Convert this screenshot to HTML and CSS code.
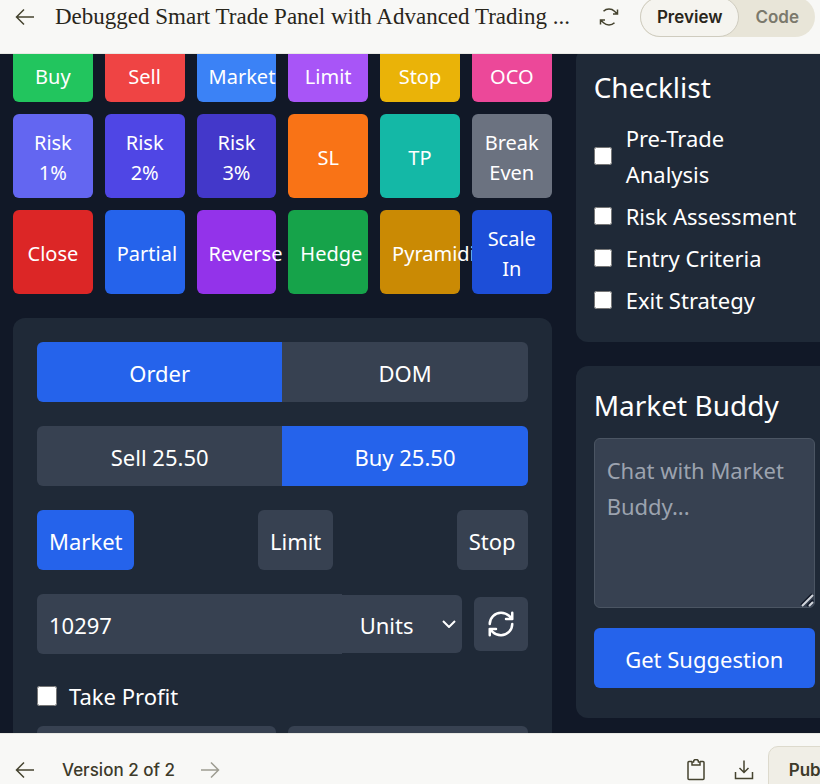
FILE: index.html
```html
<!DOCTYPE html>
<html lang="en">
<head>
<meta charset="utf-8">
<title>Smart Trade Panel</title>
<link rel="stylesheet" href="styles.css">
</head>
<body>
<header class="topbar">
  <div class="topbar-row">
    <button class="icon-btn" aria-label="Back">
      <svg width="20" height="20" viewBox="0 0 20 20"><path d="M19 10H1.5M9 2.5 1.5 10 9 17.5"/></svg>
    </button>
    <h1 class="title">Debugged Smart Trade Panel with Advanced Trading ...</h1>
    <button class="icon-btn" aria-label="Refresh">
      <svg width="20" height="20" viewBox="0 0 20 20"><path d="M18.5 2.500V7H14M18.300 7 15.500 4.300A7.800 7.800 0 0 0 4.500 4.300M1.500 17.500V13H6M1.700 13 4.500 15.700A7.800 7.800 0 0 0 15.500 15.700"/></svg>
    </button>
    <div class="switch">
      <button class="switch-item active">Preview</button>
      <button class="switch-item">Code</button>
    </div>
  </div>
</header>

<main class="preview">
  <div class="layout">
    <div class="trading">
      <div class="actions">
        <button class="action green">Buy</button>
        <button class="action red">Sell</button>
        <button class="action blue">Market</button>
        <button class="action purple">Limit</button>
        <button class="action yellow">Stop</button>
        <button class="action pink">OCO</button>
        <button class="action indigo">Risk 1%</button>
        <button class="action indigo-mid">Risk 2%</button>
        <button class="action indigo-dark">Risk 3%</button>
        <button class="action orange">SL</button>
        <button class="action teal">TP</button>
        <button class="action gray">Break Even</button>
        <button class="action red-dark">Close</button>
        <button class="action blue-mid">Partial</button>
        <button class="action purple-dark">Reverse</button>
        <button class="action green-dark">Hedge</button>
        <button class="action yellow-dark">Pyramiding</button>
        <button class="action blue-dark">Scale In</button>
      </div>

      <section class="card order">
        <div class="segmented">
          <button class="btn primary">Order</button>
          <button class="btn">DOM</button>
        </div>
        <div class="segmented">
          <button class="btn">Sell 25.50</button>
          <button class="btn primary">Buy 25.50</button>
        </div>
        <div class="types">
          <button class="btn primary">Market</button>
          <button class="btn">Limit</button>
          <button class="btn">Stop</button>
        </div>
        <div class="amount">
          <input class="field amount-input" type="text" value="10297" aria-label="Amount">
          <div class="unit">
            <select class="unit-select" aria-label="Unit"><option>Units</option></select>
            <svg class="chevron" width="14" height="8" viewBox="0 0 14 8"><path d="M1 1l6 6 6-6"/></svg>
          </div>
          <button class="btn refresh" aria-label="Refresh amount">
            <svg width="30" height="30" viewBox="0 0 24 24"><path d="M3 12a9 9 0 0 1 9-9 9.750 9.750 0 0 1 6.740 2.740L21 8M21 3v5h-5M21 12a9 9 0 0 1-9 9 9.750 9.750 0 0 1-6.740-2.740L3 16M8 16H3v5"/></svg>
          </button>
        </div>
        <label class="take"><input type="checkbox"><span>Take Profit</span></label>
        <div class="levels">
          <input class="field" type="text" aria-label="Take profit price">
          <input class="field" type="text" aria-label="Take profit amount">
        </div>
      </section>
    </div>

    <aside class="side">
      <section class="card">
        <h2>Checklist</h2>
        <label class="check"><input type="checkbox"><span>Pre-Trade Analysis</span></label>
        <label class="check"><input type="checkbox"><span>Risk Assessment</span></label>
        <label class="check"><input type="checkbox"><span>Entry Criteria</span></label>
        <label class="check"><input type="checkbox"><span>Exit Strategy</span></label>
      </section>
      <section class="card buddy">
        <h2>Market Buddy</h2>
        <div class="chat-box">
          <textarea class="chat" rows="4" placeholder="Chat with Market Buddy..." aria-label="Chat with Market Buddy"></textarea>
          <svg class="grip" width="14" height="14" viewBox="0 0 14 14"><path class="grip-dark" d="M1 12 12 1M7 13 13 7"/><path class="grip-light" d="M2 13 13 2M9 13 13 9"/></svg>
        </div>
        <button class="btn primary suggest">Get Suggestion</button>
      </section>
    </aside>
  </div>
</main>

<footer class="bottombar">
  <div class="bottom-row">
    <button class="icon-btn" aria-label="Previous version">
      <svg width="20" height="20" viewBox="0 0 20 20"><path d="M19 10H1.500M9 2.500 1.500 10 9 17.500"/></svg>
    </button>
    <span class="version">Version 2 of 2</span>
    <button class="icon-btn faded" aria-label="Next version" disabled>
      <svg width="20" height="20" viewBox="0 0 20 20"><path d="M1 10h17.500M11 2.500 18.500 10 11 17.500"/></svg>
    </button>
    <div class="tools">
      <button class="icon-btn" aria-label="Copy">
        <svg width="20" height="22" viewBox="0 0 20 22"><path d="M6 2.500H3a1 1 0 0 0-1 1V19.500a1 1 0 0 0 1 1H17a1 1 0 0 0 1-1V3.500a1 1 0 0 0-1-1H14M6 6V3H7.500A2.500 2.500 0 0 1 12.500 3H14V6Z"/></svg>
      </button>
      <button class="icon-btn" aria-label="Download">
        <svg width="20" height="22" viewBox="0 0 20 22"><path d="M10 1.500V13.500M5.500 9 10 13.500 14.500 9M1.500 13V19.500H18.500V13"/></svg>
      </button>
    </div>
    <button class="publish">Publish</button>
  </div>
</footer>
</body>
</html>
```
FILE: styles.css
```css
* { box-sizing: border-box; }

body {
  margin: 0;
  height: 100vh;
  display: flex;
  flex-direction: column;
  overflow: hidden;
  background: #111827;
  color: #fff;
  font-family: "Noto Sans", "Segoe UI", sans-serif;
  font-size: 22px;
  line-height: 36px;
}

button, input, select, textarea { font: inherit; color: inherit; }
button { border: 0; padding: 0; background: none; }
svg { display: block; fill: none; stroke: currentColor; }

/* App chrome */
.topbar {
  flex: none;
  height: 54px;
  overflow: hidden;
  background: #f8f8f6;
  border-bottom: 1px solid #e9e9e4;
  color: #29261b;
}
.topbar-row {
  display: flex;
  align-items: center;
  height: 40px;
  margin-top: -3px;
  padding: 0 5px 0 15px;
}
.icon-btn { flex: none; color: #45432f; }
.icon-btn svg { stroke-width: 1.5; }
.title {
  flex: 1;
  margin: 0 0 0 20px;
  overflow: hidden;
  white-space: nowrap;
  font: 400 23px/36px "Liberation Serif", serif;
}
.switch {
  display: flex;
  margin-left: 21px;
  border-radius: 20px;
  background: #e8e5d8;
  font: 600 17px/38px Inter, sans-serif;
}
.switch-item {
  padding: 0 15px;
  border: 1px solid transparent;
  border-radius: 20px;
  color: #7b796c;
}
.switch-item.active {
  padding: 0 16px;
  background: #f5f4ef;
  border-color: #cfccbf;
  color: #29261b;
}

.bottombar {
  flex: none;
  height: 51px;
  overflow: hidden;
  background: #f8f8f6;
  border-top: 1px solid #e9e9e4;
  color: #3d3a2a;
  font: 500 17px/24px Inter, sans-serif;
}
.bottom-row {
  display: flex;
  align-items: center;
  height: 48px;
  margin: 12px -50px 0 0;
  padding-left: 15px;
}
.version { margin: 0 25px 0 27px; }
.faded { opacity: 0.5; }
.tools {
  display: flex;
  gap: 28px;
  margin-left: auto;
}
.publish {
  width: 102px;
  height: 48px;
  margin-left: 14px;
  border: 1px solid #dddacd;
  border-radius: 10px;
  background: #f0eee6;
  font-weight: 600;
}

/* Preview */
.preview {
  flex: 1;
  min-height: 0;
  overflow: hidden;
}
.layout {
  display: grid;
  grid-template-columns: repeat(3, minmax(0, 1fr));
  align-items: start;
  gap: 24px;
  margin: -6px -13px 0 13px;
}
.trading {
  grid-column: span 2;
  display: grid;
  gap: 24px;
}
.side { display: grid; gap: 24px; }

.actions {
  display: grid;
  grid-template-columns: repeat(6, minmax(0, 1fr));
  gap: 12px;
}
.action {
  display: flex;
  align-items: center;
  justify-content: safe center;
  padding: 14px 12px 10px;
  border-radius: 6px;
  font-size: 20px;
  line-height: 30px;
}
.green { background: #22c55e; }
.red { background: #ef4444; }
.blue { background: #3b82f6; }
.purple { background: #a855f7; }
.yellow { background: #eab308; }
.pink { background: #ec4899; }
.indigo { background: #6366f1; }
.indigo-mid { background: #4f46e5; }
.indigo-dark { background: #4338ca; }
.orange { background: #f97316; }
.teal { background: #14b8a6; }
.gray { background: #6b7280; }
.red-dark { background: #dc2626; }
.blue-mid { background: #2563eb; }
.purple-dark { background: #9333ea; }
.green-dark { background: #16a34a; }
.yellow-dark { background: #ca8a04; }
.blue-dark { background: #1d4ed8; }

.card {
  padding: 18px;
  border-radius: 12px;
  background: #1f2937;
}
.card h2 {
  margin: 0 0 12px;
  font-size: 28px;
  font-weight: 400;
  line-height: 42px;
}

.btn {
  padding: 13px 12px 11px;
  border-radius: 6px;
  background: #374151;
}
.btn.primary { background: #2563eb; }

.order { padding: 24px; }
.segmented {
  display: grid;
  grid-template-columns: 1fr 1fr;
  margin-bottom: 24px;
  border-radius: 6px;
  overflow: hidden;
}
.segmented .btn { border-radius: 0; }
.types {
  display: flex;
  justify-content: space-between;
  margin-bottom: 24px;
}

.field {
  width: 100%;
  min-width: 0;
  height: 60px;
  padding: 13px 12px 11px;
  border: 0;
  border-radius: 6px;
  background: #374151;
}
.amount {
  display: flex;
  align-items: center;
  margin-bottom: 24px;
}
.amount-input {
  flex: 1;
  border-radius: 6px 0 0 6px;
}
.unit {
  position: relative;
  flex: none;
  width: 120px;
}
.unit-select {
  display: block;
  appearance: none;
  width: 100%;
  height: 58px;
  padding: 2px 18px 0;
  border: 0;
  border-radius: 0 6px 6px 0;
  background: #374151;
}
.chevron {
  position: absolute;
  right: 6px;
  top: 25px;
  stroke-width: 2;
  pointer-events: none;
}
.refresh { margin-left: 12px; padding: 12px; }
.refresh svg {
  stroke-width: 2;
  stroke-linecap: round;
  stroke-linejoin: round;
}

input[type="checkbox"] {
  flex: none;
  width: 18px;
  height: 18px;
  margin: 0;
}
.take {
  display: flex;
  align-items: center;
  gap: 12px;
  margin-bottom: 12px;
}
.take input[type="checkbox"] { width: 20px; height: 20px; }
.levels {
  display: grid;
  grid-template-columns: 1fr 1fr;
  gap: 12px;
}

.check {
  display: flex;
  align-items: center;
  gap: 14px;
  margin-bottom: 6px;
  padding-right: 12px;
}

.buddy { padding-bottom: 30px; }
.chat-box {
  position: relative;
  margin-bottom: 20px;
}
.chat {
  display: block;
  width: 100%;
  height: 170px;
  padding: 13px 12px 11px;
  border: 1px solid #4b5563;
  border-radius: 6px;
  background: #374151;
  resize: none;
}
.chat::placeholder { color: #9ca3af; }
.grip {
  position: absolute;
  right: 1px;
  bottom: 1px;
  stroke-width: 2;
  pointer-events: none;
}
.grip-dark { stroke: #111827; }
.grip-light { stroke: #d1d5db; }
.suggest { width: 100%; }
```
